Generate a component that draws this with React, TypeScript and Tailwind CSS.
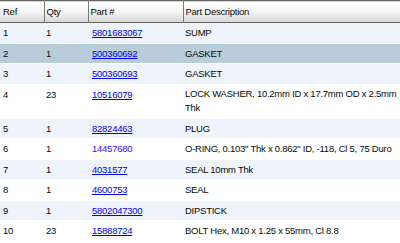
import React from "react"

type Part = {
  ref: string
  qty: string
  part: string
  desc: React.ReactNode
  plain?: boolean
  tight?: boolean
}

const parts: Part[] = [
  { ref: "1", qty: "1", part: "5801683067", desc: "SUMP" },
  { ref: "2", qty: "1", part: "500360692", desc: "GASKET" },
  { ref: "3", qty: "1", part: "500360693", desc: "GASKET" },
  {
    ref: "4",
    qty: "23",
    part: "10516079",
    tight: true,
    desc: (
      <>
        LOCK WASHER, 10.2mm ID x 17.7mm OD x 2.5mm
        <br />
        Thk
      </>
    ),
  },
  { ref: "5", qty: "1", part: "82824463", desc: "PLUG" },
  { ref: "6", qty: "1", part: "14457680", desc: "O-RING, 0.103\" Thk x 0.862\" ID, -118, Cl 5, 75 Duro", plain: true },
  { ref: "7", qty: "1", part: "4031577", desc: "SEAL 10mm Thk" },
  { ref: "8", qty: "1", part: "4600753", desc: "SEAL" },
  { ref: "9", qty: "1", part: "5802047300", desc: "DIPSTICK" },
  { ref: "10", qty: "23", part: "15888724", desc: "BOLT Hex, M10 x 1.25 x 55mm, Cl 8.8" },
]

const selected = 1

export default function App() {
  return (
    <div
      className="w-[400px] h-[243px] overflow-hidden bg-white text-[9.5px] leading-[15.5px] tracking-[-0.25px] text-[#0a0a0a]"
      style={{ fontFamily: '"Liberation Sans", Arial, sans-serif' }}
    >
      <table className="w-full border-collapse table-fixed">
        <colgroup>
          <col className="w-[44px]" />
          <col className="w-[44px]" />
          <col className="w-[95px]" />
          <col />
        </colgroup>
        <thead>
          <tr className="h-[22px] bg-gradient-to-b from-white via-[#f3f3f3] to-[#d8d8d8] border-t border-b border-[#656565]">
            <th className="pl-[3px] text-left font-normal border-r border-[#7a7a7a]">Ref</th>
            <th className="pl-[2px] text-left font-normal border-r border-[#7a7a7a]">Qty</th>
            <th className="pl-[2px] text-left font-normal border-r border-[#7a7a7a]">Part #</th>
            <th className="pl-[2px] text-left font-normal">Part Description</th>
          </tr>
        </thead>
        <tbody>
          {parts.map((p, i) => {
            const bg = i === selected ? "bg-[#b8ccd9]" : i % 2 === 0 ? "bg-[#eff3fb]" : "bg-white"
            return (
              <tr key={p.ref} className={`${bg} border-b border-white align-top`}>
                <td className="pl-[3px] py-[2px]">{p.ref}</td>
                <td className="pl-[2px] py-[2px]">{p.qty}</td>
                <td className="pl-[4px] py-[2px]">
                  <a href="#" className={p.plain ? "text-[#3a10ee] no-underline" : "text-[#0000ee] underline"}>
                    {p.part}
                  </a>
                </td>
                <td className={`pl-[2px] py-[2px] whitespace-nowrap ${p.tight ? "leading-[14.5px]" : ""}`}>{p.desc}</td>
              </tr>
            )
          })}
        </tbody>
      </table>
    </div>
  )
}
